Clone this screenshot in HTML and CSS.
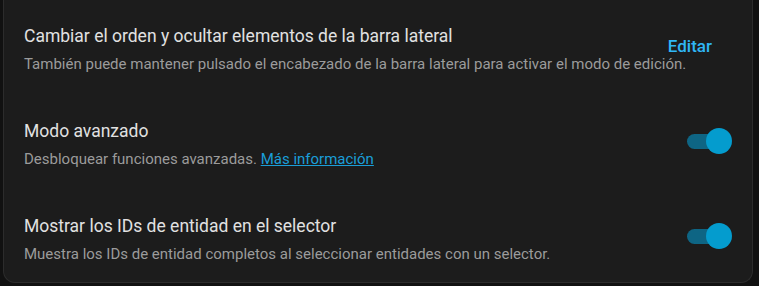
FILE: index.html
```html
<!DOCTYPE html>
<html>

<head>
    <link rel="stylesheet" href="styles.css">
</head>

<body>
    <div class="card">
        <div class="settings_row">
            <div class="row_text">
                <div class="row_title">Cambiar el orden y ocultar elementos de la barra lateral</div>
                <div class="row_desc nowrap">También puede mantener pulsado el encabezado de la barra lateral para activar el modo de edición.</div>
            </div>
            <button class="text_button">Editar</button>
        </div>

        <div class="settings_row">
            <div class="row_text">
                <div class="row_title">Modo avanzado</div>
                <div class="row_desc">Desbloquear funciones avanzadas. <a class="row_link" href="#">Más información</a></div>
            </div>
            <div class="switch checked">
                <div class="switch_track"></div>
                <div class="switch_thumb"></div>
            </div>
        </div>

        <div class="settings_row">
            <div class="row_text">
                <div class="row_title">Mostrar los IDs de entidad en el selector</div>
                <div class="row_desc">Muestra los IDs de entidad completos al seleccionar entidades con un selector.</div>
            </div>
            <div class="switch checked">
                <div class="switch_track"></div>
                <div class="switch_thumb"></div>
            </div>
        </div>
    </div>
</body>

</html>
```

FILE: styles.css
```css
html,
body {
    margin: 0;
    background: #111111;
    font-family: Roboto, "Noto Sans", sans-serif;
}

.card {
    margin: 0 6px 0 3px;
    height: 283px;
    box-sizing: border-box;
    background: #1c1c1c;
    border: 1px solid #2c2c2c;
    border-top: none;
    border-radius: 0 0 12px 12px;
    padding-top: 1px;
    overflow: hidden;
}

.settings_row {
    display: flex;
    align-items: center;
    height: 95px;
    padding: 0 20px 0 20px;
}

.row_text {
    flex: 1;
    min-width: 0;
}

.row_title {
    font-size: 17.5px;
    line-height: 26px;
    color: #e1e1e1;
}

.row_desc {
    margin-top: 4px;
    font-size: 15px;
    line-height: 22px;
    color: #9b9b9b;
}

.nowrap {
    white-space: nowrap;
}

.row_link {
    color: #1a9ed8;
}

.text_button {
    background: none;
    border: none;
    font-family: inherit;
    font-size: 17px;
    font-weight: 500;
    color: #2fb6f5;
    padding: 0 20px 5px 8px;
    cursor: pointer;
}

.switch {
    position: relative;
    width: 45px;
    height: 26px;
    margin-bottom: 5px;
}

.switch_track {
    position: absolute;
    left: 0;
    top: 6px;
    width: 38px;
    height: 15px;
    border-radius: 8px;
    background: #0e6584;
}

.switch_thumb {
    position: absolute;
    right: 0;
    top: 0;
    width: 26px;
    height: 26px;
    border-radius: 50%;
    background: #049cce;
}
```
